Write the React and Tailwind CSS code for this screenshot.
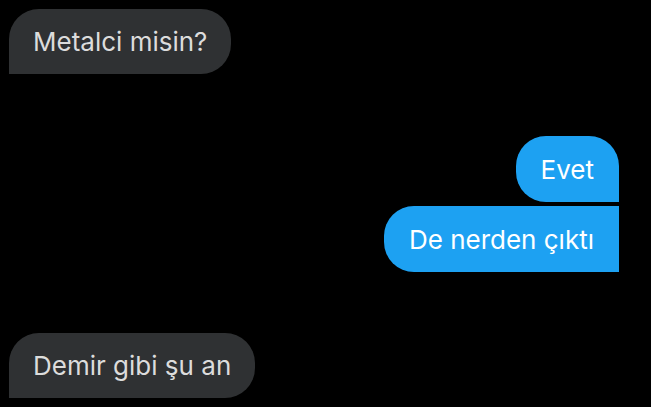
export default function App() {
  const font = { fontFamily: "Inter, 'Noto Sans', sans-serif" };
  return (
    <div
      className="w-full h-[407px] bg-black flex flex-col pt-[9px] pl-[9px] pr-[32px] overflow-hidden"
      style={font}
    >
      <div className="self-start h-[65px] flex items-center px-[24px] bg-[#2f3133] text-[#dcdcdc] text-[26px] rounded-[30px] rounded-bl-none">
        Metalci misin?
      </div>

      <div className="mt-[62px] self-end h-[66px] flex items-center px-[25px] bg-[#1da1f2] text-white text-[26px] rounded-[30px] rounded-br-none">
        Evet
      </div>
      <div className="mt-[4px] self-end h-[66px] flex items-center px-[25px] bg-[#1da1f2] text-white text-[26px] rounded-l-[30px]">
        De nerden çıktı
      </div>

      <div className="mt-[61px] self-start h-[65px] flex items-center px-[24px] bg-[#2f3133] text-[#dcdcdc] text-[26px] rounded-[30px] rounded-bl-none">
        Demir gibi şu an
      </div>
    </div>
  );
}
